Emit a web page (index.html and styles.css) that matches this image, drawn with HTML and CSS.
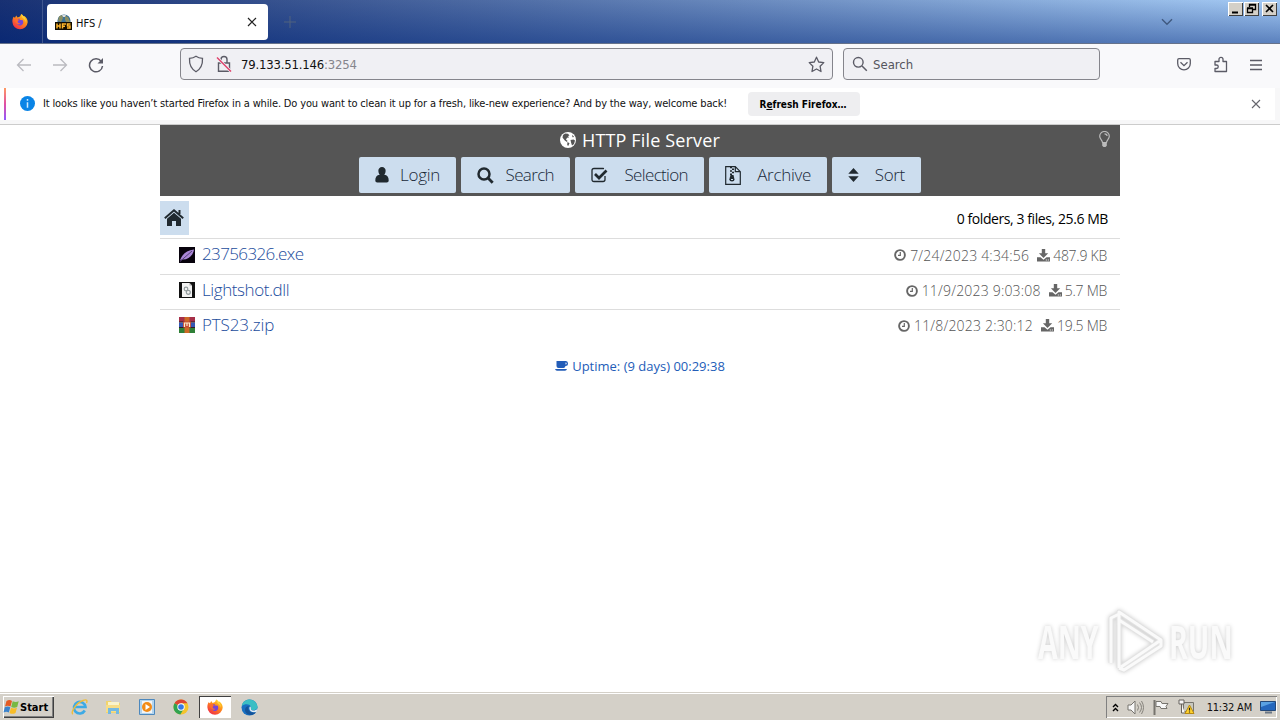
FILE: index.html
```html
<!DOCTYPE html>
<html lang="en">

<head>
    <meta charset="UTF-8">
    <meta name="viewport" content="width=device-width, initial-scale=1.0">
    <title>HFS /</title>
    <link rel="stylesheet" href="styles.css">
</head>

<body>
    <!-- shared gradients and symbols -->
    <svg class="defs" width="0" height="0">
        <defs>
            <linearGradient id="fox" x1="0.9" y1="0" x2="0.2" y2="1">
                <stop offset="0" stop-color="#ffe226" />
                <stop offset="0.45" stop-color="#ff8a1c" />
                <stop offset="1" stop-color="#f0264a" />
            </linearGradient>
            <symbol id="firefox" viewBox="0 0 16 16">
                <path fill="url(#fox)" d="M1.5 3.2 3 4.2 4.2 2l1.4 2L8 3.1 9.2.4c1 .7 1.8 1.6 2.3 2.5l.8-.4c2.2 1.6 3.5 3.9 3.4 6.3A7.7 7.7 0 0 1 8 15.8 7.7 7.7 0 0 1 .4 8.5C.3 6.5.7 4.8 1.5 3.2z" />
                <path fill="#7445d9" d="M4.5 7c.8-1.5 2.3-2 3.7-1.6-.6.4-.9.8-.9 1.2 1 .1 2.1.1 3.5.1C12 9.5 10.5 12 8 12S3.6 9.5 4.5 7z" />
                <path fill="#ff6d2c" d="M3 5.2c1.5-.5 3 .2 3.9 1.2L5.8 7.7c-.5 1.3.8 2.5 2.6 1.7-1 2.7-5.4 1.6-5.4-4.2z" />
                <path fill="#ffd13b" d="M9.5.6c2.3 2 4.8 4.8 4.3 8.3-.4-2-1.3-3.2-2.6-4.1C10 4 9.1 2.6 9.5.6z" />
            </symbol>
            <symbol id="clock" viewBox="0 0 12 12">
                <circle cx="6" cy="6" r="4.9" fill="none" stroke="#666" stroke-width="1.9" />
                <path d="M6.3 3v3.4H4" fill="none" stroke="#666" stroke-width="1.2" />
            </symbol>
            <symbol id="download" viewBox="0 0 13 13">
                <path fill="#666" d="M4.8 0h3.400v4.300h3L6.500 8.900 1.900 4.300h2.900zM0 8.300h3.500l3 2.400 3-2.400H13v4.200H0z" />
                <path fill="#fff" d="M8.800 10.500h1v1h-1zM10.800 10.500h1v1h-1z" />
            </symbol>
        </defs>
    </svg>

    <header class="titlebar">
        <div class="view"><svg width="16" height="17"><use href="#firefox" /></svg></div>
        <div class="tab">
            <svg width="17" height="17" viewBox="0 0 17 17">
                <circle cx="9" cy="7" r="6.600" fill="#3c7298" />
                <path d="M4 2.500 7 1l1 3-2 4-3-1zM10 2l3 1 2 5-3 1-2-3z" fill="#8b8f62" />
                <path d="M7 1h4l-1 2H8z" fill="#ddd" />
                <path d="M0 8h17v8H0z" fill="#110c00" />
                <path d="M2 9.500v5M5 9.500v5M2 12h3M7.500 14.500V10H11M7.500 12.300H10M15.500 10h-3v2h2.500v2h-3" fill="none" stroke="#ffb72b" stroke-width="1.500" />
            </svg>
            <span class="tab-title">HFS /</span>
            <svg class="tab-close" width="10" height="10" viewBox="0 0 10 10"><path d="M1 1l8 8M9 1 1 9" stroke="#222" stroke-width="1.200" /></svg>
        </div>
        <svg class="plus" width="12" height="12" viewBox="0 0 12 12"><path d="M6 0v12M0 6h12" stroke="#50627f" /></svg>
        <svg class="chevron" width="12" height="8" viewBox="0 0 12 8"><path d="M1 1.200 6 6.200l5-5" fill="none" stroke="#40597f" stroke-width="1.400" /></svg>
        <div class="controls">
            <svg class="btn95" width="15" height="14" viewBox="0 0 15 14"><path d="M4 10.500h6" stroke="#000" stroke-width="2" /></svg>
            <svg class="btn95" width="15" height="14" viewBox="0 0 15 14"><path d="M5.500 5V2.500h6v5H9M5 3h7M3.500 6.500h5v4h-5zM3 6h6" fill="none" stroke="#000" stroke-width="1.300" /></svg>
            <svg class="btn95 last" width="15" height="14" viewBox="0 0 15 14"><path d="m4 3 7 7M11 3l-7 7" stroke="#000" stroke-width="1.600" /></svg>
        </div>
    </header>

    <nav class="navbar">
        <div class="nav-buttons">
            <svg width="16" height="16" viewBox="0 0 16 16"><path d="M15 8H1.500M7.500 2l-6 6 6 6" fill="none" stroke="#bbbbc0" stroke-width="1.300" /></svg>
            <svg width="16" height="16" viewBox="0 0 16 16"><path d="M1 8h13.500M8.500 2l6 6-6 6" fill="none" stroke="#bbbbc0" stroke-width="1.300" /></svg>
            <svg width="16" height="16" viewBox="0 0 16 16"><path d="M13.300 4.500A6.500 6.500 0 1 0 14.500 9" fill="none" stroke="#5b5b66" stroke-width="1.500" /><path d="M15 1v5.500H9.500z" fill="#5b5b66" /></svg>
        </div>
        <div class="field url">
            <svg width="16" height="18" viewBox="0 0 16 18"><path d="M8 1.200c2 1.400 4.200 2 6.500 2.200.3 5.800-1.200 10.300-6.500 13.300C2.700 13.700 1.200 9.200 1.500 3.400 3.800 3.200 6 2.600 8 1.200z" fill="none" stroke="#5b5b66" stroke-width="1.300" /></svg>
            <svg class="lock" width="16" height="18" viewBox="0 0 16 18"><path d="M2.500 8h11v8.300h-11zM5 8V4.500a3 3 0 0 1 6 0V8" fill="none" stroke="#5b5b66" stroke-width="1.400" /><path d="m1 2.500 14 14" stroke="#efeff4" stroke-width="3" /><path d="m1 2.500 14 14" stroke="#e0416a" stroke-width="1.400" /></svg>
            <span class="address">79.133.51.146<span class="port">:3254</span></span>
            <svg class="star" width="17" height="17" viewBox="0 0 17 17"><path d="m8.500 1.200 2.200 4.800 5.100.6-3.700 3.600.9 5.300-4.500-2.500L4 15.500l.9-5.300-3.700-3.600 5.100-.6z" fill="none" stroke="#5b5b66" stroke-width="1.300" stroke-linejoin="round" /></svg>
        </div>
        <div class="field search">
            <svg width="16" height="16" viewBox="0 0 16 16"><circle cx="6.300" cy="6.300" r="4.800" fill="none" stroke="#5b5b66" stroke-width="1.400" /><path d="m10 10 4.800 4.800" stroke="#5b5b66" stroke-width="1.500" /></svg>
            <span>Search</span>
        </div>
        <div class="nav-tools">
            <svg width="14" height="13" viewBox="0 0 14 13"><path d="M2 .7h10q1.300 0 1.300 1.300v3.500a6.300 6.300 0 0 1-12.600 0V2Q.7.700 2 .7zM3.500 4.300 7 7.600l3.500-3.300" fill="none" stroke="#5b5b66" stroke-width="1.300" /></svg>
            <svg width="15" height="17" viewBox="0 0 15 17"><path d="M2 8V5.500h4V3.300a2 2 0 0 1 4 0v2.200h3.500v10H2v-3h1.500a1.700 1.700 0 0 0 0-3.500H2z" fill="none" stroke="#5b5b66" stroke-width="1.300" stroke-linejoin="round" /></svg>
            <svg width="12" height="12" viewBox="0 0 12 12"><path d="M0 1.500h12M0 6h12M0 10.500h12" stroke="#5b5b66" stroke-width="1.300" /></svg>
        </div>
    </nav>

    <div class="notice">
        <svg width="15" height="15" viewBox="0 0 15 15"><circle cx="7.500" cy="7.500" r="7.500" fill="#0a84e6" /><path d="M7.500 3v1.800M7.500 6.200v5.500" stroke="#cfeaff" stroke-width="1.500" /></svg>
        <span class="notice-text">It looks like you haven’t started Firefox in a while. Do you want to clean it up for a fresh, like-new experience? And by the way, welcome back!</span>
        <button class="refresh">R<u>e</u>fresh Firefox…</button>
        <svg class="notice-close" width="10" height="10" viewBox="0 0 10 10"><path d="m1 1 8 8M9 1 1 9" stroke="#66666d" stroke-width="1.100" /></svg>
    </div>

    <main class="page">
        <div class="server">
            <section class="top">
                <div class="title">
                    <svg width="16" height="16" viewBox="0 0 16 16"><circle cx="8" cy="8" r="8" fill="#fff" /><path d="m3 3 2-1.500 3 .3 1.500 1.700L8 4l1 1.500-2 .3-1 2 1.500 1-.5 1.200L4.800 8.500 2.500 5.500zM10.500 8l3-.5 1.500 1-1 3.500-2 1.500-.8-2.500zM12 2.700l2.200 2.300-1.700.3zM7.500 10l2 1.300-1.300 2.700-1-1z" fill="#555" /></svg>
                    <span>HTTP File Server</span>
                </div>
                <svg class="bulb" width="11" height="17" viewBox="0 0 11 17"><path d="M3.500 11.500C3.300 9 .7 8 .7 5.300a4.800 4.800 0 0 1 9.600 0C10.300 8 7.700 9 7.500 11.500zM5.500 2.800c1.500 0 2.600.9 2.600 2.300" fill="none" stroke="#bbb" stroke-width="1.200" /><path d="M3.200 11.500h4.600v3.200L6.500 16h-2l-1.300-1.300z" fill="#bbb" /></svg>
                <div class="menu">
                    <div class="menu-button login">
                        <svg width="14" height="16" viewBox="0 0 14 16"><path d="M7 0a3.600 3.600 0 0 1 3.600 4c0 1.500-.5 2.800-1.400 3.700 3.200.3 4.500 2.500 4.500 5.800 0 1.300-.8 2-2 2H2.300c-1.200 0-2-.7-2-2 0-3.300 1.300-5.500 4.500-5.800C3.900 6.800 3.400 5.500 3.400 4A3.600 3.600 0 0 1 7 0z" fill="#20292f" /></svg>
                        <span>Login</span>
                    </div>
                    <div class="menu-button find">
                        <svg width="17" height="17" viewBox="0 0 17 17"><circle cx="7" cy="7" r="5.500" fill="none" stroke="#20292f" stroke-width="2.500" /><path d="m11 11 4.700 4.700" stroke="#20292f" stroke-width="2.800" /></svg>
                        <span>Search</span>
                    </div>
                    <div class="menu-button selection">
                        <svg width="17" height="16" viewBox="0 0 17 16"><path d="M14 9v3.500q0 2-2 2H3q-2 0-2-2v-9q0-2 2-2h9l1 .2" fill="none" stroke="#20292f" stroke-width="1.300" /><path d="m4 7 4 4 7.500-7.500" fill="none" stroke="#20292f" stroke-width="2.700" /></svg>
                        <span>Selection</span>
                    </div>
                    <div class="menu-button archive">
                        <svg width="16" height="19" viewBox="0 0 16 19"><path d="M.7.700h9.600l5 5v12.600H.7zM10.300.7v5h5" fill="none" stroke="#20292f" stroke-width="1.200" /><path d="M5 1.500h2M7 3.200h2M5 4.900h2M7 6.600h2M5 8.300h2" fill="none" stroke="#20292f" stroke-width="1.500" /><path d="M5.500 9h3l1 4.500q0 2-2.500 2t-2.700-2z" fill="#20292f" /><path d="M6 13.500h2" stroke="#cde" /></svg>
                        <span>Archive</span>
                    </div>
                    <div class="menu-button sort">
                        <svg width="11" height="14" viewBox="0 0 11 14"><path d="m5.500 0 5.200 5.800H.3zM.3 8.200h10.400L5.500 14z" fill="#20292f" /></svg>
                        <span>Sort</span>
                    </div>
                </div>
            </section>

            <div class="folder-bar">
                <div class="home"><svg width="20" height="17" viewBox="0 0 20 17"><path d="m10 3.700 7 6V17h-5v-5H8v5H3V9.700z" fill="#20292f" /><path d="m.8 9.300 9.200-8 9.200 8M15.500 1v4" fill="none" stroke="#20292f" stroke-width="2" /></svg></div>
                <span class="totals">0 folders, 3 files, 25.6 MB</span>
            </div>

            <ul class="files">
                <li>
                    <svg class="file-icon" width="16" height="16" viewBox="0 0 16 16"><path d="M0 0h16v16H0z" fill="#07020c" /><path d="M1 13.500C3 7 8 3 15 2.500 14 9 9 13 3 12.500z" fill="#a985d6" /><path d="M1 14.500 13 4" stroke="#574079" /></svg>
                    <a class="name exe">23756326.exe</a>
                    <svg width="12" height="12"><use href="#clock" /></svg><span class="date">7/24/2023 4:34:56</span>
                    <svg width="13" height="13"><use href="#download" /></svg><span class="size">487.9 KB</span>
                </li>
                <li>
                    <svg class="file-icon" width="16" height="16" viewBox="0 0 16 16"><path d="M0 0h16v16H0z" fill="#111" /><path d="M3 1h7.500L13 3.500V15H3z" fill="#f2f2f2" /><path d="M10.500 1v2.500H13" fill="#aaa" /><circle cx="7" cy="7" r="1.800" fill="none" stroke="#929b9d" stroke-width="1.200" /><circle cx="9.300" cy="10.300" r="2" fill="none" stroke="#929b9d" stroke-width="1.200" /></svg>
                    <a class="name dll">Lightshot.dll</a>
                    <svg width="12" height="12"><use href="#clock" /></svg><span class="date">11/9/2023 9:03:08</span>
                    <svg width="13" height="13"><use href="#download" /></svg><span class="size">5.7 MB</span>
                </li>
                <li>
                    <svg class="file-icon" width="16" height="16" viewBox="0 0 16 16"><path d="M0 0h16v5H0z" fill="#a62f48" /><path d="M0 5.500h16v5H0z" fill="#3557b5" /><path d="M0 11h16v5H0z" fill="#2f8037" /><path d="M0 5h16M0 10.500h16" stroke="#2d1c24" /><path d="M5.500 0h5v16h-5z" fill="#cd6a26" /><path d="M4 4.500h8v6H4z" fill="#c44a35" /><path d="M5.500 10V6h5v4M8 6v3" fill="none" stroke="#fff0cb" stroke-width="1.200" /></svg>
                    <a class="name zip">PTS23.zip</a>
                    <svg width="12" height="12"><use href="#clock" /></svg><span class="date">11/8/2023 2:30:12</span>
                    <svg width="13" height="13"><use href="#download" /></svg><span class="size">19.5 MB</span>
                </li>
            </ul>

            <footer class="uptime">
                <svg width="13" height="10" viewBox="0 0 13 10"><path d="M1.500 0H11q2 0 2 2.500T10.500 5q-.5 2-2 2H3.500q-2 0-2-2zM10.500 1.500v2q1.200 0 1.200-1t-1.200-1zM0 8h12q-.5 1.800-2 1.800H2Q.5 9.800 0 8z" fill="#235db8" fill-rule="evenodd" /></svg>
                <span>Uptime: (9 days) 00:29:38</span>
            </footer>
        </div>

        <div class="watermark">
            <span>ANY</span>
            <svg width="58" height="64" viewBox="0 0 58 64"><path d="M12 59V3L54 31 14 58M12 11l34 22M4 54V9l8-4M12 59l5 2 37-24v-6" fill="none" stroke="#e3e3e3" stroke-width="5" stroke-linejoin="round" /><path d="M12 59V3L54 31 14 58M12 11l34 22M4 54V9l8-4M12 59l5 2 37-24v-6" fill="none" stroke="#fafafa" stroke-width="3" stroke-linejoin="round" /></svg>
            <span>RUN</span>
        </div>
    </main>

    <div class="taskbar">
        <div class="start">
            <svg width="17" height="16" viewBox="0 0 17 16"><path d="M3.500 2q3-2 5.500 0L7.500 7.500q-3-1.500-5.500 0z" fill="#e45b25" /><path d="M9.700 2.300q3 1.500 6 0L14.200 8q-3 1.500-6 0z" fill="#78b843" /><path d="M1.800 8.300q3-1.500 5.500 0L5.800 13.500q-2.500-1.700-5.300 0z" fill="#3b83cc" /><path d="M8 8.800q3 1.500 6 0L12.500 14q-3 1.700-6 0z" fill="#f8bd28" /></svg>
            <span>Start</span>
        </div>
        <div class="tasks">
            <div class="task"><svg width="17" height="17" viewBox="0 0 17 17"><path d="M13.800 11.500a5.800 5.800 0 1 1 .7-3.500H4" fill="none" stroke="#3daae5" stroke-width="2.600" /><path d="M2 15C-1 14 5 4 12 1.500c4-1.500 4.500 0 3.500 2.500" fill="none" stroke="#f0bd39" stroke-width="1.400" /></svg></div>
            <div class="task"><svg width="17" height="16" viewBox="0 0 17 16"><path d="M1 2h5l1 2h8v10H1z" fill="#f1d46d" /><path d="M3 3h11v4H3z" fill="#f9f3cb" /><path d="M1 6h14v7H1z" fill="#f6dd88" /><path d="M3 15V9h11v6h-3v-3H6v3z" fill="#74b9e2" /></svg></div>
            <div class="task"><svg width="16" height="16" viewBox="0 0 16 16"><path d="M.5.500h15v15H.5z" fill="#b2d4ee" stroke="#4d88bd" /><path d="M3 2h10v12H3z" fill="#f4f4f4" /><circle cx="8" cy="8" r="5" fill="#f28b17" /><path d="m6.500 5 4.500 3-4.500 3z" fill="#fff" /></svg></div>
            <div class="task"><svg width="16" height="16" viewBox="0 0 16 16"><circle cx="8" cy="8" r="7.500" fill="#f4c42c" /><path d="M8 8 1.500 4.200A7.500 7.500 0 0 1 14.500 4.300H8z" fill="#dc4434" /><path d="M1.500 4.200A7.500 7.500 0 0 0 7.300 15.500L11 9.500 8 8z" fill="#31a350" /><circle cx="8" cy="8" r="3.700" fill="#fff" /><circle cx="8" cy="8" r="2.800" fill="#3679e4" /></svg></div>
            <div class="task active"><svg width="16" height="16"><use href="#firefox" /></svg></div>
            <div class="task"><svg width="17" height="17" viewBox="0 0 17 17"><circle cx="8.500" cy="8.500" r="8" fill="#176fc1" /><path d="M.8 7C2-1 14-2 16.500 7c.5 3-2 4.500-5.500 4-2-.5-1.500-1.500-1-2.500C10 5 4 4 .8 7z" fill="#3bbec4" /><path d="M8 7c-2 3 0 7 5 6.500l2-.5c-3 5-11 3-11-2C4 8.500 6 7 8 7z" fill="#145399" /><path d="M9.500 7.500c1 2-.5 3 1.500 3.800 2 .6 4 0 5.300-1.300l-.7 3c-5 1-8-1-7-5z" fill="#e4edf1" /></svg></div>
        </div>
        <div class="tray">
            <svg width="7" height="9" viewBox="0 0 7 9"><path d="m1 4 2.500-2.500L6 4M1 8l2.500-2.500L6 8" fill="none" stroke="#000" stroke-width="1.400" /></svg>
            <svg width="18" height="15" viewBox="0 0 18 15"><path d="M1 5h3l4-4v13l-4-4H1z" fill="#f8f8f8" stroke="#77746e" /><path d="M10.500 4.500q2 3 0 6M12.500 2.500q4 5 0 10M14.500 1q4 6.500 0 13" fill="none" stroke="#85827b" /></svg>
            <svg width="17" height="15" viewBox="0 0 17 15"><path d="M1.500 0v15" stroke="#77746e" stroke-width="2" /><path d="M3 1.500h5l1 2h6l-2 3 1 2H8l-1-2H3z" fill="#f8f8f8" stroke="#77746e" /></svg>
            <svg width="17" height="16" viewBox="0 0 17 16"><path d="M5.500 3.500h10v9h-10z" fill="#c8c8c0" stroke="#77746e" /><path d="M1 1h5v4H1zM3.500 5v9H7" fill="#f8f8f8" stroke="#66635e" /><path d="m11.500 6 4.500 8.500H7z" fill="#ffd22e" stroke="#b78910" /><path d="M11.500 8.800v2.700M11.500 12.500v1" stroke="#222" stroke-width="1.200" /></svg>
            <span class="time">11:32 AM</span>
            <svg width="16" height="14" viewBox="0 0 16 14"><path d="M.5 1.500h15v9H.5z" fill="#2567bd" stroke="#254979" /><path d="M1 2h14L1 7z" fill="#5aa1e3" /><path d="M5 12.500h7" stroke="#6b7785" stroke-width="2" /></svg>
        </div>
    </div>
</body>

</html>
```
FILE: styles.css
```css
* {
    box-sizing: border-box;
}

body {
    margin: 0;
    width: 1280px;
    height: 720px;
    overflow: hidden;
    display: flex;
    flex-direction: column;
    background: #fff;
    font-family: "DejaVu Sans Condensed", "DejaVu Sans", sans-serif;
    font-stretch: condensed;
    font-size: 11px;
    color: #111;
}

svg {
    display: block;
    flex: none;
}

span,
a,
button {
    white-space: nowrap;
}

.defs {
    position: absolute;
}

/* window title */
.titlebar {
    height: 44px;
    flex: none;
    display: flex;
    background: linear-gradient(to bottom, rgba(255, 255, 255, .06), rgba(10, 46, 126, .46)), linear-gradient(to right, #0a246a, #a0c8f4);
    border-bottom: 1px solid #66728a;
}

.view {
    width: 43px;
    padding: 13px 0 0 12px;
    border-right: 1px solid #40578f;
}

.tab {
    width: 221px;
    height: 36px;
    margin: 4px 0 0 4px;
    padding: 0 11px 0 8px;
    display: flex;
    align-items: center;
    border-radius: 4px;
    background: #fff;
}

.tab-title {
    margin: 2px 0 0 4px;
}

.tab-close {
    margin-left: auto;
}

.plus {
    margin: 16px 0 0 16px;
}

.chevron {
    margin: 18px 55px 0 auto;
}

.controls {
    display: flex;
    padding: 2px 3px 0 0;
}

.btn95 {
    background: #d4d0c8;
    box-shadow: inset 1px 1px #fff, inset -1px -1px #404040;
}

.btn95 + .btn95 {
    margin-left: 1px;
}

.btn95.last {
    margin-left: 3px;
}

/* navigation */
.navbar {
    height: 44px;
    flex: none;
    display: flex;
    background: #f9f9fb;
    padding-top: 4px;
}

.nav-buttons {
    width: 180px;
    height: 33px;
    display: flex;
    align-items: center;
    gap: 20px;
    padding-left: 16px;
}

.field {
    height: 32px;
    display: flex;
    align-items: center;
    border: 1px solid #85858c;
    border-radius: 4px;
    background: #f0f0f4;
    font-size: 13px;
}

.url {
    width: 653px;
    padding: 0 7px;
}

.lock {
    margin-left: 12px;
}

.address {
    margin-left: 9px;
    letter-spacing: -.2px;
}

.port {
    color: #85858c;
}

.star {
    margin-left: auto;
}

.search {
    width: 257px;
    margin-left: 10px;
    padding-left: 8px;
    gap: 5px;
    color: #55555d;
}

.nav-tools {
    height: 33px;
    display: flex;
    align-items: center;
    gap: 22px;
    margin-left: 77px;
}

/* refresh notification */
.notice {
    height: 37px;
    flex: none;
    display: flex;
    align-items: center;
    padding: 0 19px 5px 20px;
    border-bottom: 1px solid #ccc;
    background: linear-gradient(to bottom, #ff9a62, #e14fa3, #9059ff) 4px 0 / 2px 32px no-repeat, linear-gradient(#fff, #fff) 0 0 / 1275px 32px no-repeat, #f7f7f8;
}

.notice-text {
    width: 684px;
    margin-left: 8px;
    letter-spacing: -.148px;
}

.refresh {
    width: 112px;
    height: 24px;
    margin-left: 21px;
    padding: 2px 2px 0 0;
    border: 0;
    border-radius: 4px;
    background: #eeeef0;
    font: bold 10px "DejaVu Sans Condensed", "DejaVu Sans", sans-serif;
    font-stretch: condensed;
}

.notice-close {
    margin-left: auto;
}

/* file server page */
.page {
    flex: 1;
    position: relative;
    font-family: "Open Sans", "Noto Sans", sans-serif;
    font-stretch: normal;
}

.server {
    width: 960px;
    margin: 0 auto;
}

.top {
    height: 71px;
    position: relative;
    background: #555;
}

.title {
    height: 32px;
    padding-bottom: 2px;
    display: flex;
    align-items: center;
    justify-content: center;
    gap: 6px;
    color: #fff;
    font-size: 18px;
    letter-spacing: .15px;
}

.bulb {
    position: absolute;
    right: 10px;
    top: 6px;
}

.menu {
    display: flex;
    justify-content: center;
    gap: 5px;
}

.menu-button {
    height: 36px;
    display: flex;
    align-items: center;
    justify-content: space-between;
    padding: 0 16px;
    border-radius: 2px;
    background: #cde;
    color: #182838;
    font-size: 17px;
    font-weight: 300;
    letter-spacing: -.3px;
}

.menu-button span {
    margin-top: -2px;
}

.login {
    width: 97px;
}

.find {
    width: 109px;
    letter-spacing: -.65px;
}

.selection {
    width: 129px;
    letter-spacing: -.65px;
}

.archive {
    width: 118px;
}

.sort {
    width: 89px;
}

.folder-bar {
    height: 43px;
    display: flex;
    align-items: center;
    justify-content: space-between;
    padding: 1px 12px 0 0;
    border-bottom: 1px solid #ddd;
}

.home {
    width: 29px;
    height: 34px;
    display: flex;
    align-items: center;
    padding-left: 4px;
    background: #cde;
}

.totals {
    margin-top: 2px;
    font-size: 14px;
    color: #000;
    letter-spacing: -.42px;
}

.files {
    list-style: none;
    margin: 0;
    padding: 0;
}

.files li {
    height: 35px;
    display: flex;
    align-items: center;
    padding: 0 13px 3px 19px;
    border-bottom: 1px solid #ddd;
    color: #555;
    font-size: 14px;
    font-weight: 300;
}

.files li:first-child {
    height: 36px;
}

.files li:last-child {
    border-bottom: 0;
    height: 31px;
    padding-bottom: 0;
}

.file-icon {
    margin-top: -1px;
}

.name {
    margin: -3px auto 0 7px;
    color: #1b4c9c;
    font-size: 17px;
}

.exe {
    letter-spacing: -.62px;
}

.dll {
    letter-spacing: -.42px;
}

.zip {
    letter-spacing: -.12px;
}

.date {
    margin: 0 8px 0 4px;
    letter-spacing: .19px;
}

.size {
    margin-left: 3px;
    letter-spacing: -.25px;
}

.uptime {
    display: flex;
    align-items: center;
    justify-content: center;
    gap: 4px;
    margin-top: 16px;
    color: #235db8;
    font-size: 13px;
}

.watermark {
    position: absolute;
    left: 1038px;
    top: 484px;
    display: flex;
    align-items: center;
    gap: 4px;
    color: #fafafa;
    font: bold 46px/64px "Open Sans", sans-serif;
    font-stretch: normal;
    filter: drop-shadow(0 0 2px #ccc);
}

.watermark span {
    width: 65px;
    transform: scaleX(.62);
    transform-origin: 0 0;
}

/* windows taskbar */
.taskbar {
    height: 28px;
    flex: none;
    display: flex;
    align-items: center;
    padding: 1px 3px 0;
    border-top: 1px solid #d4d0c8;
    background: #d4d0c8;
    box-shadow: inset 0 1px #fff;
}

.start {
    width: 51px;
    height: 22px;
    display: flex;
    align-items: center;
    background: #d4d0c8;
    box-shadow: inset 1px 1px #fff, inset -1px -1px #404040, inset -2px -2px #808080;
    color: #000;
    font-weight: bold;
}

.tasks {
    display: flex;
    margin-left: 9px;
    gap: 2px;
}

.task {
    width: 32px;
    height: 22px;
    display: flex;
    align-items: center;
    justify-content: center;
}

.active {
    background: #fff;
    box-shadow: inset 1px 1px #404040;
}

.tray {
    width: 171px;
    height: 22px;
    margin-left: auto;
    padding: 0 1px 0 6px;
    display: flex;
    align-items: center;
    gap: 8px;
    box-shadow: inset 1px 1px #808080, inset -1px -1px #fff;
}

.time {
    margin-left: auto;
    letter-spacing: -.2px;
}
```
